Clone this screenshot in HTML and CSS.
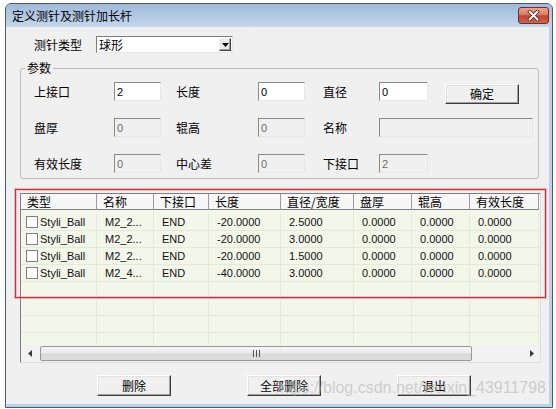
FILE: index.html
```html
<!DOCTYPE html>
<html lang="zh">
<head>
<meta charset="utf-8">
<title>定义测针及测针加长杆</title>
<link rel="stylesheet" href="styles.css">
</head>
<body>
<div class="window">
  <div class="titlebar">
    <span class="title">定义测针及测针加长杆</span>
    <button class="close" aria-label="关闭">
      <svg width="13" height="11" viewBox="0 0 13 11">
        <path d="M2.5 1.5 L10.5 9.5 M10.5 1.5 L2.5 9.5" stroke="#5b2116" stroke-width="3.6" stroke-linecap="round"/>
        <path d="M2.5 1.5 L10.5 9.5 M10.5 1.5 L2.5 9.5" stroke="#ffffff" stroke-width="2" stroke-linecap="round"/>
      </svg>
    </button>
  </div>
  <div class="client">
    <div class="type-row">
      <span class="type-label">测针类型</span>
      <div class="combo">
        <span class="combo-text">球形</span>
        <span class="combo-btn"><svg width="7" height="4" viewBox="0 0 7 4"><path d="M0 0 H7 L3.5 4 Z" fill="#000"/></svg></span>
      </div>
    </div>

    <fieldset class="group">
      <legend>参数</legend>
      <div class="params">
        <span class="lbl c1">上接口</span>
        <span class="input c2">2</span>
        <span class="lbl c4">长度</span>
        <span class="input c5">0</span>
        <span class="lbl c7">直径</span>
        <span class="input c8">0</span>
        <button class="btn ok c10">确定</button>

        <span class="lbl c1">盘厚</span>
        <span class="input disabled c2">0</span>
        <span class="lbl c4">辊高</span>
        <span class="input disabled c5">0</span>
        <span class="lbl c7">名称</span>
        <span class="input disabled name"></span>

        <span class="lbl c1">有效长度</span>
        <span class="input disabled c2">0</span>
        <span class="lbl c4">中心差</span>
        <span class="input disabled c5">0</span>
        <span class="lbl c7">下接口</span>
        <span class="input disabled c8">2</span>
      </div>
    </fieldset>

    <div class="list">
      <div class="list-head">
        <span class="hcell">类型</span>
        <span class="hcell">名称</span>
        <span class="hcell">下接口</span>
        <span class="hcell">长度</span>
        <span class="hcell">直径/宽度</span>
        <span class="hcell">盘厚</span>
        <span class="hcell">辊高</span>
        <span class="hcell">有效长度</span>
      </div>
      <div class="list-body">
        <div class="row">
          <span class="cell first"><span class="check"></span>Styli_Ball</span>
          <span class="cell">M2_2...</span><span class="cell">END</span><span class="cell">-20.0000</span>
          <span class="cell">2.5000</span><span class="cell">0.0000</span><span class="cell">0.0000</span><span class="cell">0.0000</span>
        </div>
        <div class="row">
          <span class="cell first"><span class="check"></span>Styli_Ball</span>
          <span class="cell">M2_2...</span><span class="cell">END</span><span class="cell">-20.0000</span>
          <span class="cell">3.0000</span><span class="cell">0.0000</span><span class="cell">0.0000</span><span class="cell">0.0000</span>
        </div>
        <div class="row">
          <span class="cell first"><span class="check"></span>Styli_Ball</span>
          <span class="cell">M2_2...</span><span class="cell">END</span><span class="cell">-20.0000</span>
          <span class="cell">1.5000</span><span class="cell">0.0000</span><span class="cell">0.0000</span><span class="cell">0.0000</span>
        </div>
        <div class="row">
          <span class="cell first"><span class="check"></span>Styli_Ball</span>
          <span class="cell">M2_4...</span><span class="cell">END</span><span class="cell">-40.0000</span>
          <span class="cell">3.0000</span><span class="cell">0.0000</span><span class="cell">0.0000</span><span class="cell">0.0000</span>
        </div>
        <div class="row"><span class="cell"></span><span class="cell"></span><span class="cell"></span><span class="cell"></span><span class="cell"></span><span class="cell"></span><span class="cell"></span><span class="cell"></span></div>
        <div class="row"><span class="cell"></span><span class="cell"></span><span class="cell"></span><span class="cell"></span><span class="cell"></span><span class="cell"></span><span class="cell"></span><span class="cell"></span></div>
        <div class="row"><span class="cell"></span><span class="cell"></span><span class="cell"></span><span class="cell"></span><span class="cell"></span><span class="cell"></span><span class="cell"></span><span class="cell"></span></div>
        <div class="row"><span class="cell"></span><span class="cell"></span><span class="cell"></span><span class="cell"></span><span class="cell"></span><span class="cell"></span><span class="cell"></span><span class="cell"></span></div>
      </div>
      <div class="hscroll">
        <span class="sb-btn"><svg width="4" height="7" viewBox="0 0 4 7"><path d="M4 0 V7 L0 3.5 Z" fill="#3c3c3c"/></svg></span>
        <span class="sb-thumb"><svg width="7" height="7" viewBox="0 0 7 7"><path d="M0.5 0 V7 M3.5 0 V7 M6.5 0 V7" stroke="#555" stroke-width="1"/></svg></span>
        <span class="sb-track"></span>
        <span class="sb-btn"><svg width="4" height="7" viewBox="0 0 4 7"><path d="M0 0 V7 L4 3.5 Z" fill="#3c3c3c"/></svg></span>
      </div>
    </div>

    <div class="actions">
      <button class="btn action">删除</button>
      <button class="btn action">全部删除</button>
      <button class="btn action">退出</button>
    </div>

    <div class="highlight"></div>
    <div class="watermark">https://blog.csdn.net/weixin_43911798</div>
  </div>
</div>
</body>
</html>
```

FILE: styles.css
```css
* { box-sizing: border-box; }
html, body { margin: 0; padding: 0; background: #ffffff; }
body {
  font-family: "Liberation Sans", "Noto Sans CJK SC", sans-serif;
  font-size: 12px;
  color: #000;
}

.window {
  margin: 3px 0 0 5px;
  width: 548px;
  height: 405px;
  border: 1px solid #4a5b6e;
  border-radius: 6px 6px 0 0;
  background: #b9d3ea;
  display: flex;
  flex-direction: column;
  overflow: hidden;
}

.titlebar {
  flex: none;
  height: 23px;
  display: flex;
  align-items: center;
  justify-content: space-between;
  padding: 0 3px 0 6px;
  background: linear-gradient(#a0bad9, #c3d7ed);
}
.title { font-size: 12px; line-height: 14px; font-family: "Noto Sans CJK SC", sans-serif; }

.close {
  width: 31px;
  height: 17px;
  padding: 0;
  border: 1px solid #7a2c20;
  border-radius: 3px;
  background: linear-gradient(#e9a390, #db7c63 45%, #c4432a 52%, #d0664a);
  display: flex;
  align-items: center;
  justify-content: center;
}

.client {
  flex: 1;
  position: relative;
  margin: 0 3px 3px 0;
  background: #f0f0f0;
  display: flex;
  flex-direction: column;
}

.type-row {
  display: flex;
  align-items: center;
  margin: 9px 0 0 28px;
  height: 17px;
}
.type-label { width: 62px; line-height: 14px; font-family: "Noto Sans CJK SC", sans-serif; }
.combo {
  width: 137px;
  height: 17px;
  border: 1px solid;
  border-color: #7c7c7c #e6e6e6 #e6e6e6 #7c7c7c;
  background: #fff;
  display: flex;
  align-items: center;
  justify-content: space-between;
  padding-left: 2px;
}
.combo-text { line-height: 14px; font-family: "Noto Sans CJK SC", sans-serif; }
.combo-btn {
  width: 12px;
  height: 13px;
  margin-right: 1px;
  border: 1px solid;
  border-color: #f4f4f4 #404040 #404040 #f4f4f4;
  box-shadow: inset -1px -1px 0 #a0a0a0;
  background: #ececec;
  display: flex;
  align-items: center;
  justify-content: center;
}

.group {
  margin: 8px 0 0 14px;
  width: 519px;
  min-width: 0;
  padding: 7px 0 5px 0;
  border: 1px solid #bcbcbc;
  border-radius: 3px;
}
.group legend {
  margin-left: 4px;
  padding: 0 2px;
  line-height: 14px;
  font-family: "Noto Sans CJK SC", sans-serif;
}

.params {
  margin-left: 13px;
  display: grid;
  grid-template-columns: 80px 47px 15px 82px 47px 18px 56px 49px 17px 74px 14px;
  grid-template-rows: 19px 19px 19px;
  row-gap: 17px;
  align-items: center;
}
.c1 { grid-column: 1; }
.c2 { grid-column: 2; }
.c4 { grid-column: 4; }
.c5 { grid-column: 5; }
.c7 { grid-column: 7; }
.c8 { grid-column: 8; }
.c10 { grid-column: 10; }
.name { grid-column: 8 / 12; }

.lbl { line-height: 14px; font-family: "Noto Sans CJK SC", sans-serif; white-space: nowrap; }
.input {
  height: 19px;
  border: 1px solid;
  border-color: #8a8a8a #e8e8e8 #e8e8e8 #8a8a8a;
  background: #fff;
  padding-left: 2px;
  display: flex;
  align-items: center;
  font-size: 11px;
}
.input.disabled { background: #f0f0f0; color: #6d6d6d; }

.btn {
  padding: 0;
  font-family: "Noto Sans CJK SC", sans-serif;
  font-size: 12px;
  line-height: 14px;
  color: #000;
  background: #f0f0f0;
  border: 1px solid;
  border-color: #ffffff #3e3e3e #3e3e3e #ffffff;
  box-shadow: inset -1px -1px 0 #a0a0a0, inset 1px 1px 0 #e3e3e3;
}
.ok {
  align-self: start;
  margin-top: 2px;
  width: 74px;
  height: 20px;
}

.list {
  margin: 14px 0 0 14px;
  width: 521px;
  height: 170px;
  border: 1px solid;
  border-color: #7e7e7e #dedede #dedede #7e7e7e;
  display: flex;
  flex-direction: column;
  background: #f3f7ea;
  overflow: hidden;
}
.list-head, .row {
  display: grid;
  grid-template-columns: 76px 57px 55px 72px 73px 58px 58px 69px;
}
.list-head { height: 16px; flex: none; background: #f7f7f7; }
.hcell {
  border-right: 1px solid #9c9c9c;
  border-bottom: 1px solid #7d7d7d;
  padding-left: 6px;
  line-height: 15px;
  font-family: "Noto Sans CJK SC", sans-serif;
  white-space: nowrap;
}
.list-body {
  flex: 1;
  padding-top: 4px;
  overflow: hidden;
}
.row { height: 17px; border-bottom: 1px solid #e4e9da; }
.cell {
  border-right: 1px solid #e4e9da;
  padding-left: 8px;
  font-size: 11px;
  line-height: 16px;
  color: #111;
  white-space: nowrap;
  display: flex;
  align-items: center;
}
.cell.first { padding-left: 5px; }
.check {
  width: 12px;
  height: 12px;
  flex: none;
  margin-right: 2px;
  border: 1px solid #7f7f7f;
  background: #fff;
}

.hscroll {
  flex: none;
  height: 17px;
  display: flex;
  background: #f2f2f2;
}
.sb-btn {
  width: 17px;
  flex: none;
  display: flex;
  align-items: center;
  justify-content: center;
}
.sb-thumb {
  width: 432px;
  flex: none;
  margin: 1px 0 1px 2px;
  border: 1px solid #999;
  border-radius: 2px;
  background: linear-gradient(#f6f6f6, #e9e9e9 48%, #d9d9d9 52%, #dcdcdc);
  display: flex;
  align-items: center;
  justify-content: center;
}
.sb-track { flex: 1; }

.actions {
  display: flex;
  gap: 76px;
  margin: 12px 0 0 91px;
}
.action { width: 74px; height: 21px; }

.highlight {
  position: absolute;
  left: 9px;
  top: 162px;
  width: 531px;
  height: 109px;
  border: 1px solid #d42a36;
  box-shadow: 0 0 0 1px rgba(230, 110, 120, 0.45), inset 0 0 0 1px rgba(230, 110, 120, 0.35);
  pointer-events: none;
}
.watermark {
  position: absolute;
  right: 3px;
  top: 352px;
  font-family: "Liberation Sans", sans-serif;
  font-size: 16px;
  line-height: 18px;
  color: rgba(175, 175, 175, 0.55);
  pointer-events: none;
  white-space: nowrap;
}
```
